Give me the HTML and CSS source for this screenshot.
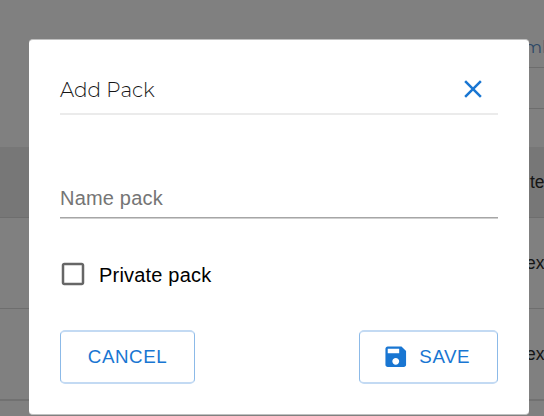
FILE: index.html
```html
<!DOCTYPE html>
<html lang="en">
<head>
<meta charset="utf-8">
<title>Add Pack</title>
<link rel="stylesheet" href="styles.css">
</head>
<body>
<main class="page">
  <div class="toolbar"><span class="toolbar-label">ml</span></div>
  <div class="filter"></div>
  <div class="table">
    <div class="row row-head"><span>te</span></div>
    <div class="row"><span class="cell">ex</span></div>
    <div class="row row-last"><span class="cell">ex</span></div>
  </div>
</main>
<section class="dialog" role="dialog" aria-label="Add Pack">
  <header class="dialog-head">
    <h1 class="title">Add Pack</h1>
    <button class="close" aria-label="Close"><svg viewBox="0 0 24 24"><path d="M19 6.41 17.59 5 12 10.59 6.41 5 5 6.41 10.59 12 5 17.59 6.41 19 12 13.41 17.59 19 19 17.59 13.41 12z"/></svg></button>
  </header>
  <div class="field">Name pack</div>
  <label class="check">
    <svg viewBox="0 0 24 24"><path d="M19 5v14H5V5h14m0-2H5c-1.1 0-2 .9-2 2v14c0 1.1.9 2 2 2h14c1.1 0 2-.9 2-2V5c0-1.1-.9-2-2-2z"/></svg>
    <span class="check-label">Private pack</span>
  </label>
  <footer class="actions">
    <button class="btn btn-cancel">CANCEL</button>
    <button class="btn btn-save"><svg viewBox="0 0 24 24"><path d="M17 3H5c-1.11 0-2 .9-2 2v14c0 1.1.89 2 2 2h14c1.1 0 2-.9 2-2V7l-4-4zm-5 16c-1.66 0-3-1.34-3-3s1.34-3 3-3 3 1.34 3 3-1.34 3-3 3zm3-10H5V5h10v4z"/></svg><span>SAVE</span></button>
  </footer>
</section>
</body>
</html>
```
FILE: styles.css
```css
* { box-sizing: border-box; }
body {
  margin: 0;
  height: 416px;
  overflow: hidden;
  position: relative;
  background: #808080;
  font-family: "Liberation Sans", Arial, sans-serif;
}
button { font: inherit; padding: 0; background: none; cursor: pointer; }
svg { display: block; fill: currentColor; flex: none; }

.page { color: #151515; font-size: 17.5px; }
.toolbar {
  height: 68px;
  margin-left: 500px;
  padding: 36px 0 0 24px;
  border-bottom: 1px solid #6d6d6d;
}
.toolbar-label {
  display: block;
  font: 400 17px/22px Montserrat, Inter, sans-serif;
  color: #2c4866;
  white-space: nowrap;
}
.filter { height: 41px; margin-left: 500px; border-bottom: 1px solid #6d6d6d; }
.table { margin-top: 38px; }
.row {
  display: flex;
  align-items: center;
  height: 91px;
  padding-left: 530px;
  border-bottom: 1px solid #6e6e6e;
}
.row-head { height: 71px; background: #777; }
.row-last { height: 92px; border-bottom: 2px solid #717171; }
.cell { margin-left: -4px; }

.dialog {
  position: absolute;
  left: 29px;
  top: 39px;
  width: 500px;
  height: 376px;
  padding: 34px 31px 0;
  background: #fff;
  border: solid #c0c0c0;
  border-width: 1px 0;
  border-radius: 4px;
}
.dialog-head {
  display: flex;
  justify-content: space-between;
  height: 41px;
  padding-right: 10px;
  border-bottom: 2px solid #ebebeb;
}
.title {
  margin: 0;
  font: 300 20px/32px Montserrat, Inter, sans-serif;
  letter-spacing: 0.05px;
  color: #151515;
}
.close { width: 30px; height: 30px; border: 0; color: #1976d2; }
.close svg { width: 30px; height: 30px; }
.field {
  height: 43px;
  margin-top: 60px;
  padding-top: 12px;
  font-size: 20px;
  line-height: 23px;
  letter-spacing: 0.19px;
  color: #757575;
  border-bottom: 1px solid #a6a6a6;
  box-shadow: 0 1px #d0d0d0;
}
.check {
  display: flex;
  align-items: center;
  gap: 11px;
  width: max-content;
  margin: 41px 0 0 -2px;
  font-size: 20px;
  letter-spacing: 0.19px;
  color: #000;
}
.check svg { width: 30px; height: 30px; color: #666; }
.check-label { padding-top: 2px; }
.actions { display: flex; justify-content: space-between; margin-top: 41px; }
.btn {
  display: flex;
  align-items: center;
  justify-content: center;
  height: 54px;
  border: solid;
  border-width: 2px 1px;
  border-color: #c3daf3 #8cbae8;
  border-radius: 5px;
  font-size: 18.75px;
  letter-spacing: 0.54px;
  color: #1976d2;
}
.btn-cancel { width: 135px; }
.btn-save { width: 139px; padding-right: 5px; gap: 10px; }
.btn svg { width: 27.5px; height: 27.5px; }
```
